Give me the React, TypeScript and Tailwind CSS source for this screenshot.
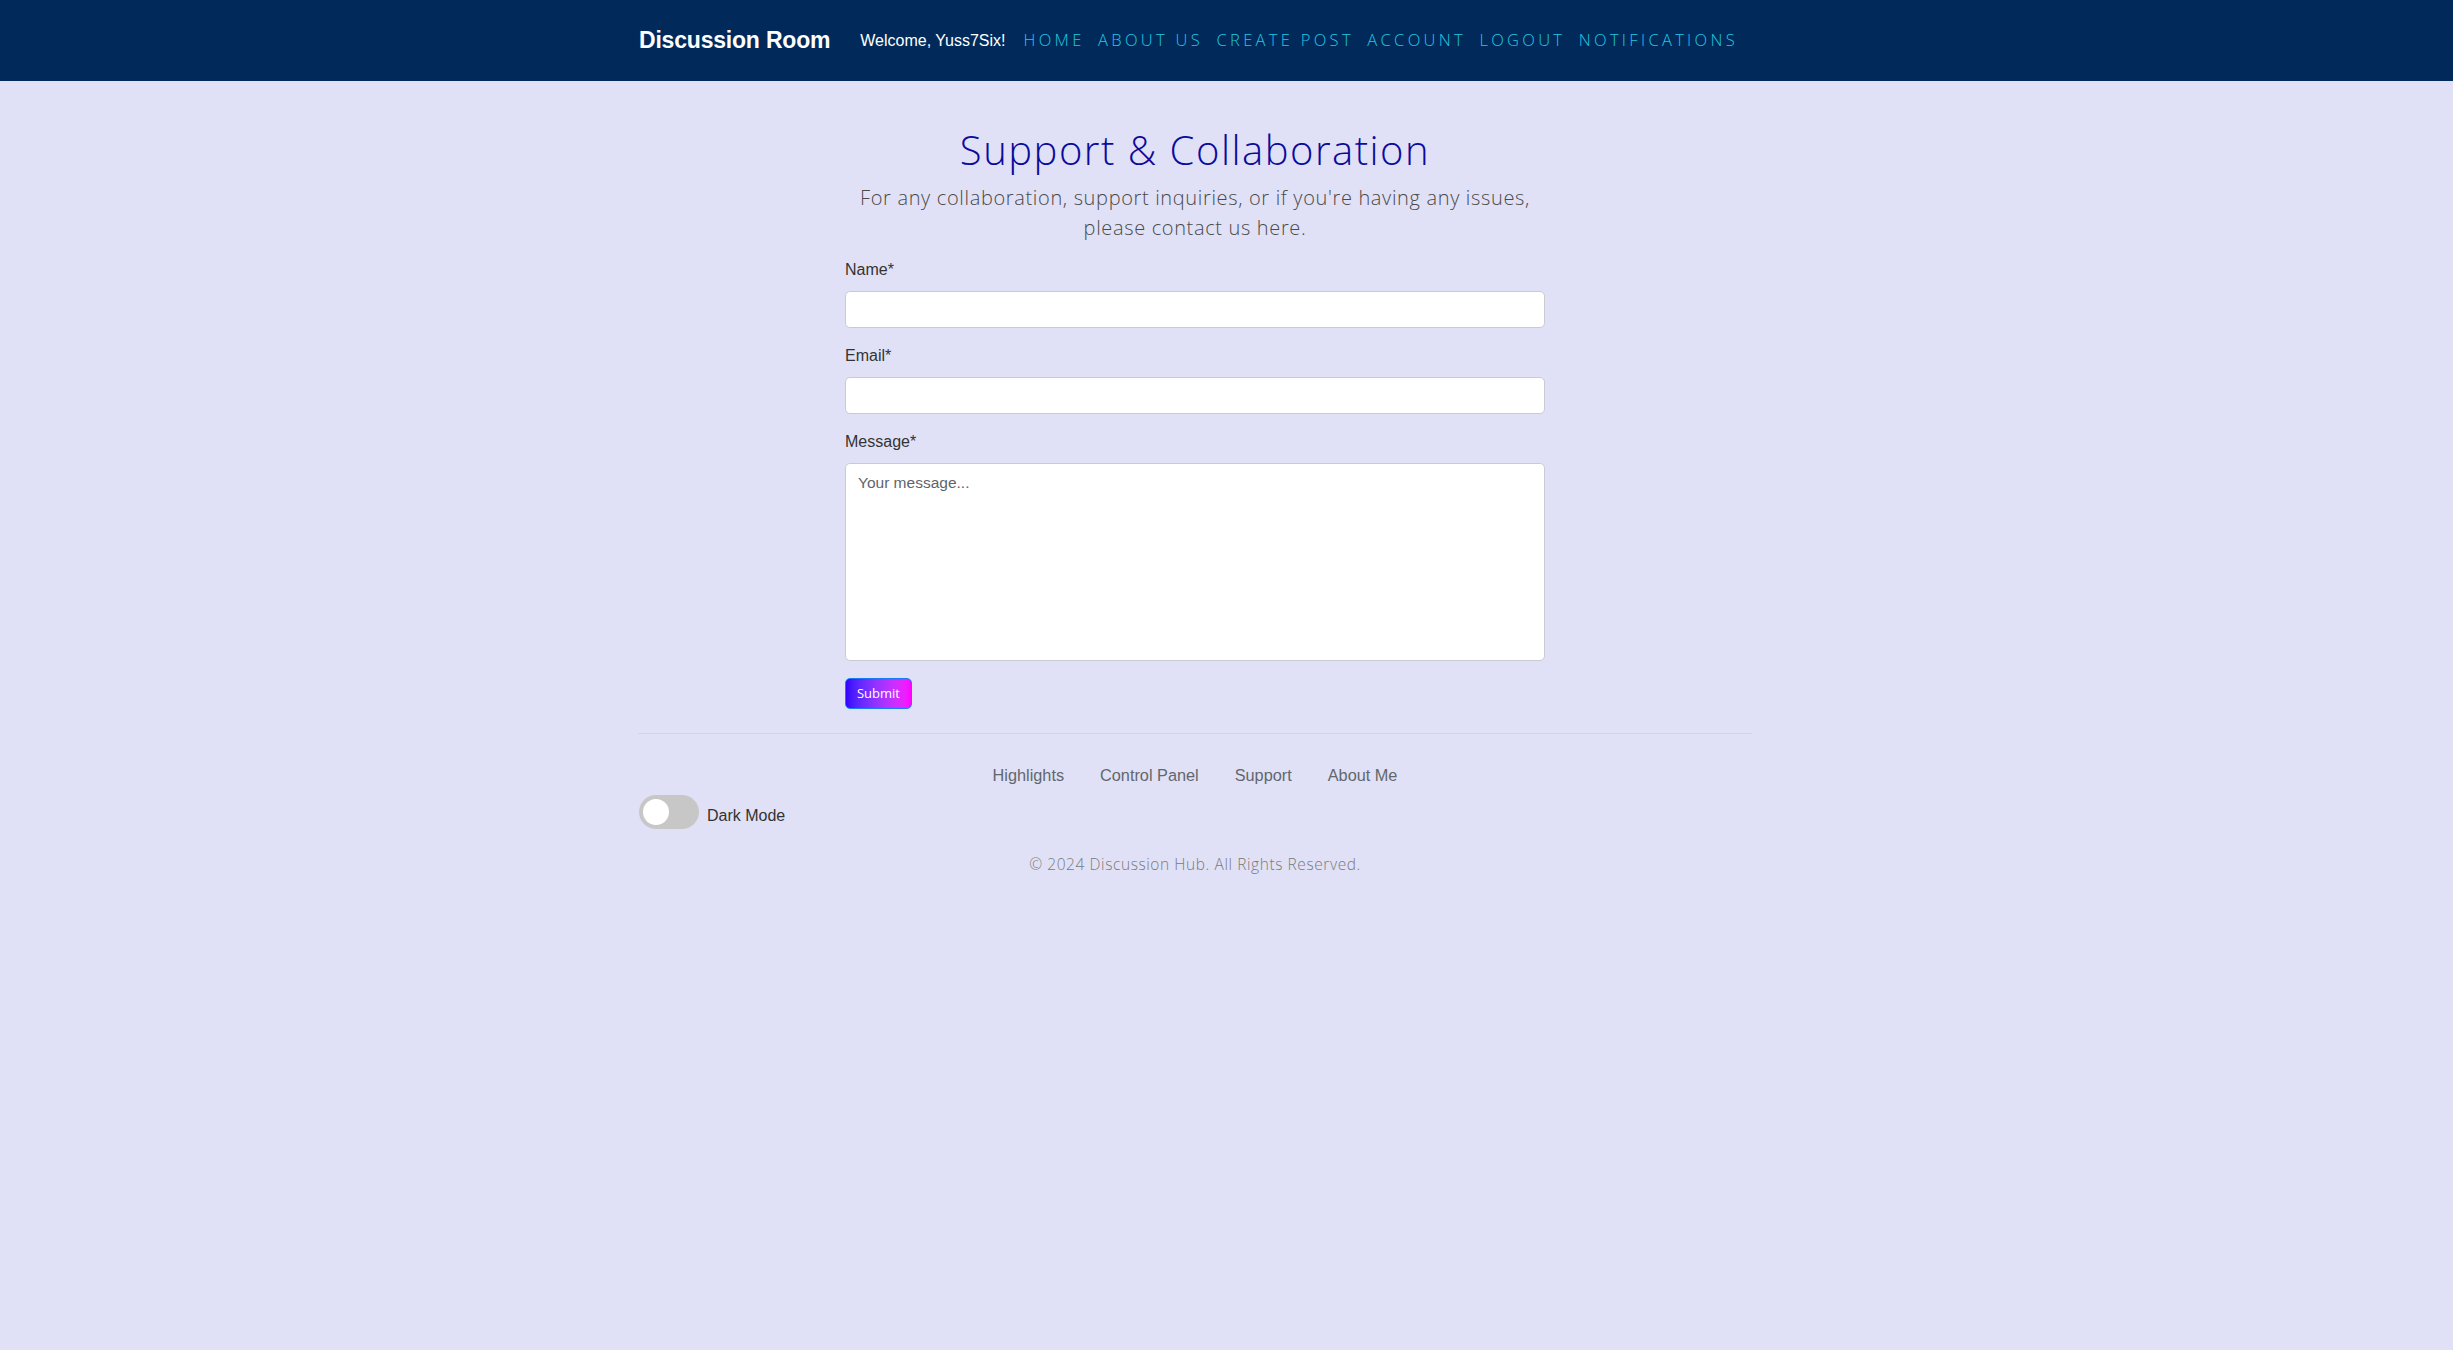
import React from "react";

const sys = { fontFamily: '"Liberation Sans", Arial, sans-serif' };
const geo = { fontFamily: '"Open Sans", Lato, "Noto Sans", sans-serif' };

export default function App() {
  const navLinks = ["HOME", "ABOUT US", "CREATE POST", "ACCOUNT", "LOGOUT", "NOTIFICATIONS"];
  const footerLinks = ["Highlights", "Control Panel", "Support", "About Me"];
  return (
    <div className="min-h-[1350px] w-full bg-[#e0e1f6]" style={sys}>
      <nav className="h-[81px] w-full bg-[#012a5b] pr-[63px]">
        <div className="mx-auto flex h-full w-[1114px] items-center">
          <span className="ml-[1px] text-[23px] font-bold tracking-[-0.2px] text-white">Discussion Room</span>
          <span className="ml-[30px] text-[16px] text-white">Welcome, Yuss7Six!</span>
          <div className="ml-[18px] flex items-center gap-[13.5px]" style={geo}>
            {navLinks.map((l) => (
              <a key={l} className="text-[16.5px] font-light tracking-[3.3px] text-[#20c8e2]">
                {l}
              </a>
            ))}
          </div>
        </div>
      </nav>

      <div className="w-full pr-[63px]">
        <div className="mx-auto w-[1114px]">
          <div className="mx-auto flex w-[800px] flex-col items-center pt-[45px]">
            <h1 className="text-[40px] leading-[48px] font-light tracking-[1.5px] text-[#0b0b9c]" style={geo}>
              Support &amp; Collaboration
            </h1>
            <p
              className="mt-[9px] text-center text-[20px] leading-[30px] font-light tracking-[0.65px] text-[#4a4a4a]"
              style={geo}
            >
              For any collaboration, support inquiries, or if you're having any issues,
              <br />
              please contact us here.
            </p>
          </div>

          <form className="mx-auto mt-[15px] flex w-[700px] flex-col">
            <label className="text-[16px] leading-[24px] text-[#333]">Name*</label>
            <input className="mt-[9px] h-[37px] w-full rounded-[5px] border border-[#c9cbd3] bg-white" />
            <label className="mt-[16px] text-[16px] leading-[24px] text-[#333]">Email*</label>
            <input className="mt-[9px] h-[37px] w-full rounded-[5px] border border-[#c9cbd3] bg-white" />
            <label className="mt-[16px] text-[16px] leading-[24px] text-[#333]">Message*</label>
            <textarea
              placeholder="Your message..."
              className="mt-[9px] h-[198px] w-full resize-none rounded-[5px] border border-[#c9cbd3] bg-white px-3 pt-[7px] text-[15.5px] leading-[24px] placeholder:text-[#5f646b]"
            />
            <div className="mt-[17px]">
              <button
                type="button"
                className="h-[31px] w-[67px] rounded-[5px] border border-[#1a7cf5] bg-gradient-to-r from-[#3300ff] to-[#ff00ff] text-[13px] text-white"
                style={geo}
              >
                Submit
              </button>
            </div>
          </form>

          <hr className="mt-[24px] border-0 border-t border-[#d4d5e3]" />

          <div className="mt-[29px] flex justify-center gap-[36px] text-[16.3px] leading-[24px] text-[#62676e]">
            {footerLinks.map((l) => (
              <a key={l}>{l}</a>
            ))}
          </div>

          <div className="mt-[8px] flex items-center">
            <div className="ml-[1px] flex h-[34px] w-[60px] items-center rounded-full bg-[#c7c7c7] pl-[4px]">
              <div className="h-[26px] w-[26px] rounded-full bg-white" />
            </div>
            <span className="ml-[8px] mt-[7px] text-[16px] text-[#333]">Dark Mode</span>
          </div>

          <p
            className="mt-[23px] text-center text-[15.5px] leading-[24px] font-light tracking-[0.58px] text-[#7a7a7a]"
            style={geo}
          >
            © 2024 Discussion Hub. All Rights Reserved.
          </p>
        </div>
      </div>
    </div>
  );
}
